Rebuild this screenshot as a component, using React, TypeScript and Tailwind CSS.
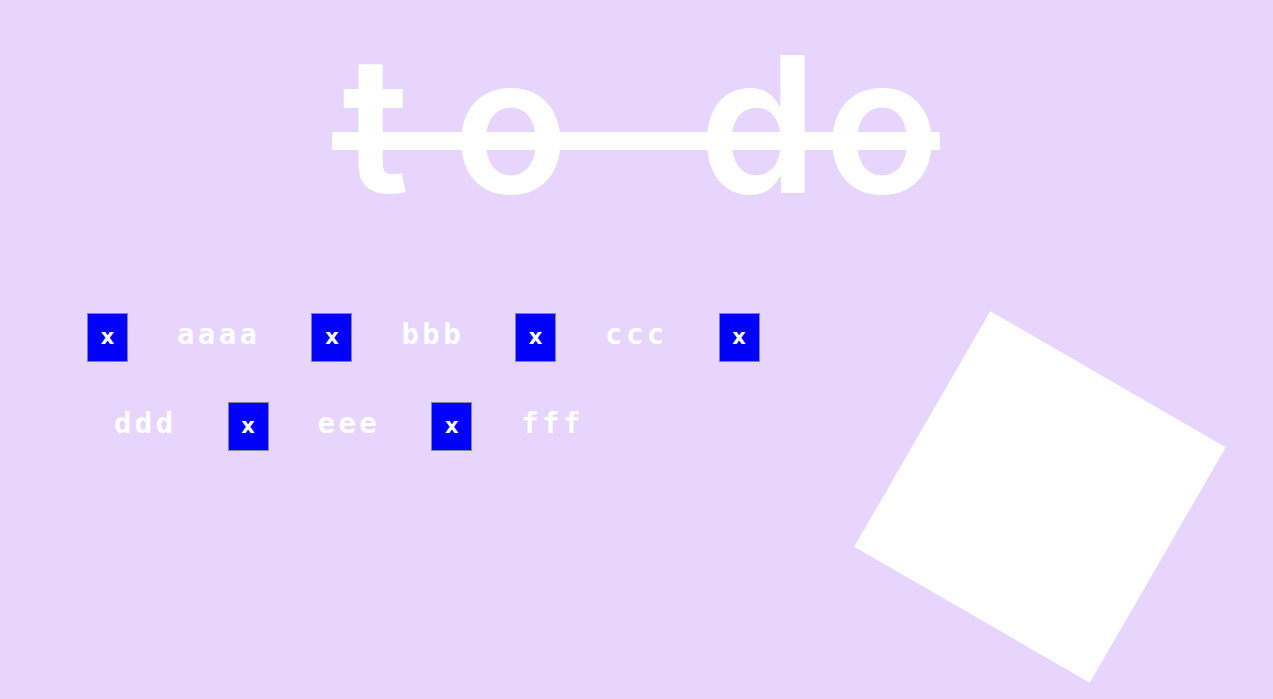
const rows: { kind: "btn" | "text"; label: string }[][] = [
  [
    { kind: "btn", label: "x" },
    { kind: "text", label: "aaaa" },
    { kind: "btn", label: "x" },
    { kind: "text", label: "bbb" },
    { kind: "btn", label: "x" },
    { kind: "text", label: "ccc" },
    { kind: "btn", label: "x" },
  ],
  [
    { kind: "text", label: "ddd" },
    { kind: "btn", label: "x" },
    { kind: "text", label: "eee" },
    { kind: "btn", label: "x" },
    { kind: "text", label: "fff" },
  ],
];

function DeleteButton({ first }: { first: boolean }) {
  return (
    <button
      className={`${first ? "" : "ml-[51px]"} flex h-[49px] w-[41px] shrink-0 items-center justify-center border border-[#85859a] bg-[#0000ff] font-['DejaVu_Sans',sans-serif] text-[21px] font-bold leading-none text-white`}
    >
      x
    </button>
  );
}

function Item({ label, first }: { label: string; first: boolean }) {
  return (
    <span
      className={`${first ? "" : "ml-[49px]"} mt-[7px] font-['DejaVu_Sans_Mono',monospace] text-[29px] font-bold leading-none tracking-[3.4px] text-white`}
    >
      {label}
    </span>
  );
}

export default function App() {
  return (
    <div className="min-h-screen w-full overflow-hidden bg-[#e7d5fd]">
      <div className="flex justify-center pl-[9px] pt-[29px]">
        <h1 className="relative font-['Inter',sans-serif] text-[190px] font-semibold leading-none text-white">
          <span className="tracking-[44px]">t</span>
          <span className="tracking-[41px]">o </span>
          <span className="tracking-[7px]">d</span>
          <span className="tracking-[0px]">o</span>
          {/* strike line over the heading */}
          <span className="absolute -left-[10px] right-0 top-[103px] h-[18px] bg-white" />
        </h1>
      </div>

      <div className="flex">
        <div className="mt-[94px] flex w-[904px] shrink-0 flex-col gap-[40px]">
          <div className="flex items-start pl-[87px]">
            {rows[0].map((it, i) =>
              it.kind === "btn" ? (
                <DeleteButton key={i} first={i === 0} />
              ) : (
                <Item key={i} label={it.label} first={i === 0} />
              )
            )}
          </div>
          <div className="flex items-start pl-[114px]">
            {rows[1].map((it, i) =>
              it.kind === "btn" ? (
                <DeleteButton key={i} first={i === 0} />
              ) : (
                <Item key={i} label={it.label} first={i === 0} />
              )
            )}
          </div>
        </div>

        <div className="mt-[142px] h-[272px] w-[272px] shrink-0 rotate-30 bg-white" />
      </div>
    </div>
  );
}
